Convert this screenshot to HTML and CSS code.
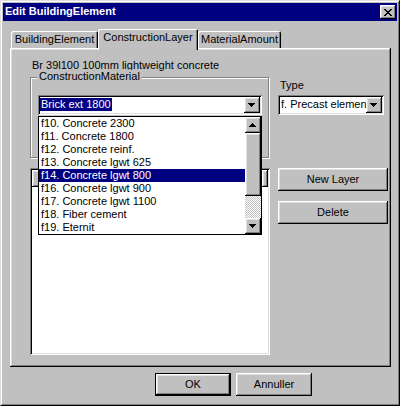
FILE: index.html
```html
<!DOCTYPE html>
<html>
<head>
<meta charset="utf-8">
<link rel="stylesheet" href="styles.css">
</head>
<body>
<div class="window">
  <div class="frame">
    <div class="titlebar">
      <span class="title">Edit BuildingElement</span>
      <div class="close raised">
        <svg width="8" height="7" viewBox="0 0 8 7"><path fill="#000" d="M0 0h2v1H0zM6 0h2v1H6zM1 1h2v1H1zM5 1h2v1H5zM2 2h4v1H2zM3 3h2v1H3zM2 4h4v1H2zM1 5h2v1H1zM5 5h2v1H5zM0 6h2v1H0zM6 6h2v1H6z"/></svg>
      </div>
    </div>
    <div class="body">
      <div class="tabs">
        <div class="tab t1">BuildingElement</div>
        <div class="tab t2 active">ConstructionLayer</div>
        <div class="tab t3">MaterialAmount</div>
      </div>
      <div class="panel">
        <div class="leftcol">
          <div class="desc">Br 39l100 100mm lightweight concrete</div>
          <div class="group">
            <div class="legend">ConstructionMaterial</div>
            <div class="combo main-combo">
              <div class="combo-field"><span class="sel">Brick ext 1800</span></div>
              <div class="combo-btn raised">
                <svg width="7" height="4" viewBox="0 0 7 4"><path fill="#000" d="M0 0h7v1H0zM1 1h5v1H1zM2 2h3v1H2zM3 3h1v1H3z"/></svg>
              </div>
              <div class="dropdown">
                <ul class="items">
                  <li>f10. Concrete 2300</li>
                  <li>f11. Concrete 1800</li>
                  <li>f12. Concrete reinf.</li>
                  <li>f13. Concrete lgwt 625</li>
                  <li class="hl">f14. Concrete lgwt 800</li>
                  <li>f16. Concrete lgwt 900</li>
                  <li>f17. Concrete lgwt 1100</li>
                  <li>f18. Fiber cement</li>
                  <li>f19. Eternit</li>
                </ul>
                <div class="scrollbar">
                  <div class="sb-btn raised">
                    <svg width="7" height="4" viewBox="0 0 7 4"><path fill="#000" d="M3 0h1v1H3zM2 1h3v1H2zM1 2h5v1H1zM0 3h7v1H0z"/></svg>
                  </div>
                  <div class="sb-thumb raised"></div>
                  <div class="sb-track"></div>
                  <div class="sb-btn raised">
                    <svg width="7" height="4" viewBox="0 0 7 4"><path fill="#000" d="M0 0h7v1H0zM1 1h5v1H1zM2 2h3v1H2zM3 3h1v1H3z"/></svg>
                  </div>
                </div>
              </div>
            </div>
          </div>
          <div class="listview">
            <div class="lv-header">
              <div class="lv-col raised"></div>
              <div class="lv-fill raised"></div>
            </div>
          </div>
        </div>
        <div class="rightcol">
          <div class="type-label">Type</div>
          <div class="combo type-combo">
            <div class="combo-field"><span class="plain">f. Precast elemen</span></div>
            <div class="combo-btn raised">
              <svg width="7" height="4" viewBox="0 0 7 4"><path fill="#000" d="M0 0h7v1H0zM1 1h5v1H1zM2 2h3v1H2zM3 3h1v1H3z"/></svg>
            </div>
          </div>
          <button class="btn side-btn first">New Layer</button>
          <button class="btn side-btn second">Delete</button>
        </div>
      </div>
      <div class="footer">
        <button class="btn foot-btn default">OK</button>
        <button class="btn foot-btn">Annuller</button>
      </div>
    </div>
  </div>
</div>
</body>
</html>
```
FILE: styles.css
```css
html, body {
  margin: 0;
  padding: 0;
  background: #c0c0c0;
}
body {
  font-family: "Liberation Sans", Arial, sans-serif;
  font-size: 11px;
  color: #000;
}
.window {
  width: 400px;
  height: 406px;
  box-sizing: border-box;
  border: 1px solid;
  border-color: #dfdfdf #000 #000 #dfdfdf;
  background: #c0c0c0;
}
.frame {
  height: 100%;
  box-sizing: border-box;
  border: 1px solid;
  border-color: #fff #808080 #808080 #fff;
  padding: 1px;
  display: flex;
  flex-direction: column;
}
.raised {
  background: #c0c0c0;
  box-shadow: inset -1px -1px #000, inset 1px 1px #fff, inset -2px -2px #808080, inset 2px 2px #dfdfdf;
}
.titlebar {
  height: 18px;
  flex-shrink: 0;
  background: #000080;
  color: #fff;
  display: flex;
  justify-content: space-between;
  align-items: flex-start;
}
.title {
  font-weight: bold;
  line-height: 13px;
  padding: 2px 0 0 2px;
}
.close {
  width: 16px;
  height: 14px;
  margin: 2px 1px 0 0;
  display: flex;
  align-items: center;
  justify-content: center;
}
.close svg { display: block; margin-left: -1px; }
.body {
  flex: 1;
  padding: 8px 6px 0 7px;
  display: flex;
  flex-direction: column;
}
.tabs {
  display: flex;
  align-items: flex-end;
  height: 19px;
  padding-left: 1px;
}
.tab {
  height: 17px;
  box-sizing: border-box;
  padding-top: 2px;
  line-height: 13px;
  text-align: center;
  white-space: nowrap;
  border-radius: 2px 2px 0 0;
  background: #c0c0c0;
  box-shadow: inset 1px 1px #fff, inset -1px 0 #000, inset -2px 0 #808080;
}
.t1 { width: 87px; }
.t2 { width: 100px; }
.t3 { width: 83px; }
.tab.active {
  height: 21px;
  margin-bottom: -2px;
  position: relative;
  z-index: 1;
}
.panel {
  height: 319px;
  box-sizing: border-box;
  background: #c0c0c0;
  box-shadow: inset -1px -1px #000, inset 1px 1px #fff, inset -2px -2px #808080, inset 2px 2px #dfdfdf;
  display: flex;
  gap: 8px;
  padding: 2px 2px 2px 20px;
}
.leftcol {
  width: 240px;
  display: flex;
  flex-direction: column;
}
.desc {
  margin: 9px 0 0 2px;
  line-height: 13px;
  white-space: nowrap;
}
.group {
  margin-top: 5px;
  width: 239px;
  height: 81px;
  box-sizing: border-box;
  border: 1px solid #808080;
  box-shadow: inset 1px 1px #fff, 1px 1px #fff;
}
.legend {
  margin: -8px 0 0 6px;
  padding: 0 2px;
  width: max-content;
  line-height: 13px;
  background: #c0c0c0;
}
.combo {
  position: relative;
  height: 20px;
  box-sizing: border-box;
  background: #fff;
  box-shadow: inset 1px 1px #808080, inset -1px -1px #fff, inset 2px 2px #000, inset -2px -2px #dfdfdf;
  display: flex;
  padding: 2px;
}
.main-combo {
  margin: 12px 0 0 7px;
  width: 224px;
}
.combo-field {
  flex: 1;
  overflow: hidden;
  white-space: nowrap;
}
.sel {
  display: inline-block;
  margin-top: 1px;
  padding: 0 1px;
  line-height: 13px;
  background: #000080;
  color: #fff;
}
.plain {
  display: inline-block;
  margin: 1px 0 0 1px;
  line-height: 13px;
}
.combo-btn {
  width: 16px;
  height: 16px;
  flex-shrink: 0;
  display: flex;
  align-items: center;
  justify-content: center;
}
.combo-btn svg, .sb-btn svg { display: block; margin-left: -1px; }
.dropdown {
  position: absolute;
  left: 0;
  top: calc(100% + 1px);
  width: 224px;
  box-sizing: border-box;
  border: 1px solid #000;
  background: #fff;
  display: flex;
  z-index: 5;
}
.items {
  flex: 1;
  margin: 0;
  padding: 0;
  list-style: none;
}
.items li {
  height: 13px;
  line-height: 13px;
  padding-left: 2px;
  white-space: nowrap;
}
.items li.hl {
  background: #000080;
  color: #fff;
}
.scrollbar {
  width: 16px;
  display: flex;
  flex-direction: column;
}
.sb-btn {
  height: 16px;
  display: flex;
  align-items: center;
  justify-content: center;
}
.sb-thumb {
  height: 63px;
}
.sb-track {
  flex: 1;
  background: repeating-conic-gradient(#c0c0c0 0 25%, #fff 0 50%) 0 0 / 2px 2px;
}
.listview {
  margin-top: 10px;
  width: 240px;
  height: 187px;
  box-sizing: border-box;
  padding: 2px;
  background: #fff;
  box-shadow: inset 1px 1px #808080, inset -1px -1px #fff, inset 2px 2px #000, inset -2px -2px #dfdfdf;
}
.lv-header {
  display: flex;
  height: 17px;
}
.lv-col { width: 230px; }
.lv-fill { flex: 1; }
.rightcol {
  width: 110px;
  display: flex;
  flex-direction: column;
}
.type-label {
  margin-top: 29px;
  padding-left: 2px;
  line-height: 13px;
}
.type-combo {
  margin-top: 3px;
  width: 106px;
}
.btn {
  font-family: "Liberation Sans", Arial, sans-serif;
  font-size: 11px;
  color: #000;
  background: #c0c0c0;
  border: none;
  padding: 0;
  margin: 0;
  box-sizing: border-box;
  box-shadow: inset -1px -1px #000, inset 1px 1px #fff, inset -2px -2px #808080, inset 2px 2px #dfdfdf;
  line-height: 13px;
}
.side-btn {
  width: 110px;
  height: 23px;
}
.side-btn.first { margin-top: 53px; }
.side-btn.second { margin-top: 10px; }
.footer {
  display: flex;
  gap: 5px;
  margin-top: 6px;
  padding-left: 145px;
}
.foot-btn {
  width: 76px;
  height: 23px;
}
.foot-btn.default {
  border: 1px solid #000;
}
```
